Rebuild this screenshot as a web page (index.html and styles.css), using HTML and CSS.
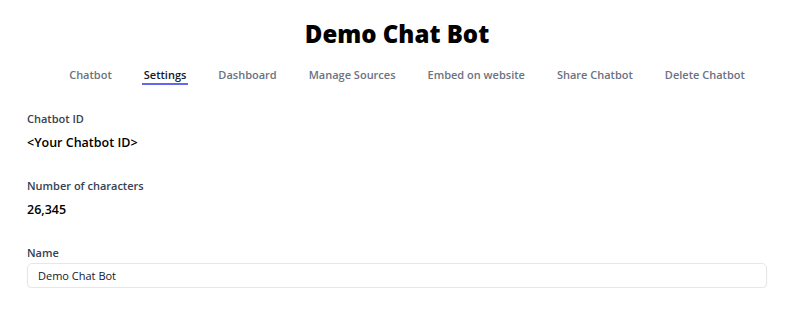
FILE: index.html
```html
<!DOCTYPE html>
<html lang="en">
<head>
<meta charset="utf-8">
<title>Demo Chat Bot</title>
<link rel="stylesheet" href="styles.css">
</head>
<body>
<div class="page">
  <h1 class="title">Demo Chat Bot</h1>
  <nav class="tabs">
    <a class="tab">Chatbot</a>
    <a class="tab active">Settings</a>
    <a class="tab">Dashboard</a>
    <a class="tab">Manage Sources</a>
    <a class="tab">Embed on website</a>
    <a class="tab">Share Chatbot</a>
    <a class="tab">Delete Chatbot</a>
  </nav>
  <section class="content">
    <div class="field">
      <div class="label">Chatbot ID</div>
      <div class="value">&lt;Your Chatbot ID&gt;</div>
    </div>
    <div class="field">
      <div class="label">Number of characters</div>
      <div class="value">26,345</div>
    </div>
    <div class="field">
      <label class="label" for="name">Name</label>
      <input id="name" class="input" type="text" value="Demo Chat Bot">
    </div>
  </section>
</div>
</body>
</html>
```
FILE: styles.css
```css
* { box-sizing: border-box; }
html, body { margin: 0; padding: 0; background: #fff; }
body {
  font-family: "Open Sans", "Noto Sans", sans-serif;
  color: #111827;
}
.page {
  padding: 18px 24px 0 27px;
}
.title {
  margin: 0;
  text-align: center;
  font-size: 24px;
  font-weight: 800;
  line-height: 32px;
  color: #000;
}
.tabs {
  display: flex;
  justify-content: center;
  gap: 28px;
  margin-top: 17px;
  padding-left: 20px;
}
.tab {
  white-space: nowrap;
  font-size: 11px;
  font-weight: 600;
  color: #6b7280;
  padding: 0 2px;
  border-bottom: 2px solid transparent;
  line-height: 16px;
}
.tab.active {
  color: #111827;
  border-bottom-color: #6366f1;
}
.content {
  margin-top: 25px;
  display: flex;
  flex-direction: column;
  gap: 24px;
}
.field { display: flex; flex-direction: column; }
.label {
  font-size: 11px;
  font-weight: 600;
  color: #374151;
  line-height: 18px;
}
.value {
  margin-top: 5px;
  font-size: 12.5px;
  font-weight: 600;
  color: #000;
  line-height: 20px;
}
.input {
  margin-top: 1px;
  width: 100%;
  height: 25px;
  border: 1px solid #e5e7eb;
  border-radius: 5px;
  box-shadow: 0 1px 2px rgba(0,0,0,0.06);
  padding: 0 10px;
  font-family: inherit;
  font-size: 11px;
  color: #111827;
  background: #fff;
}
```
